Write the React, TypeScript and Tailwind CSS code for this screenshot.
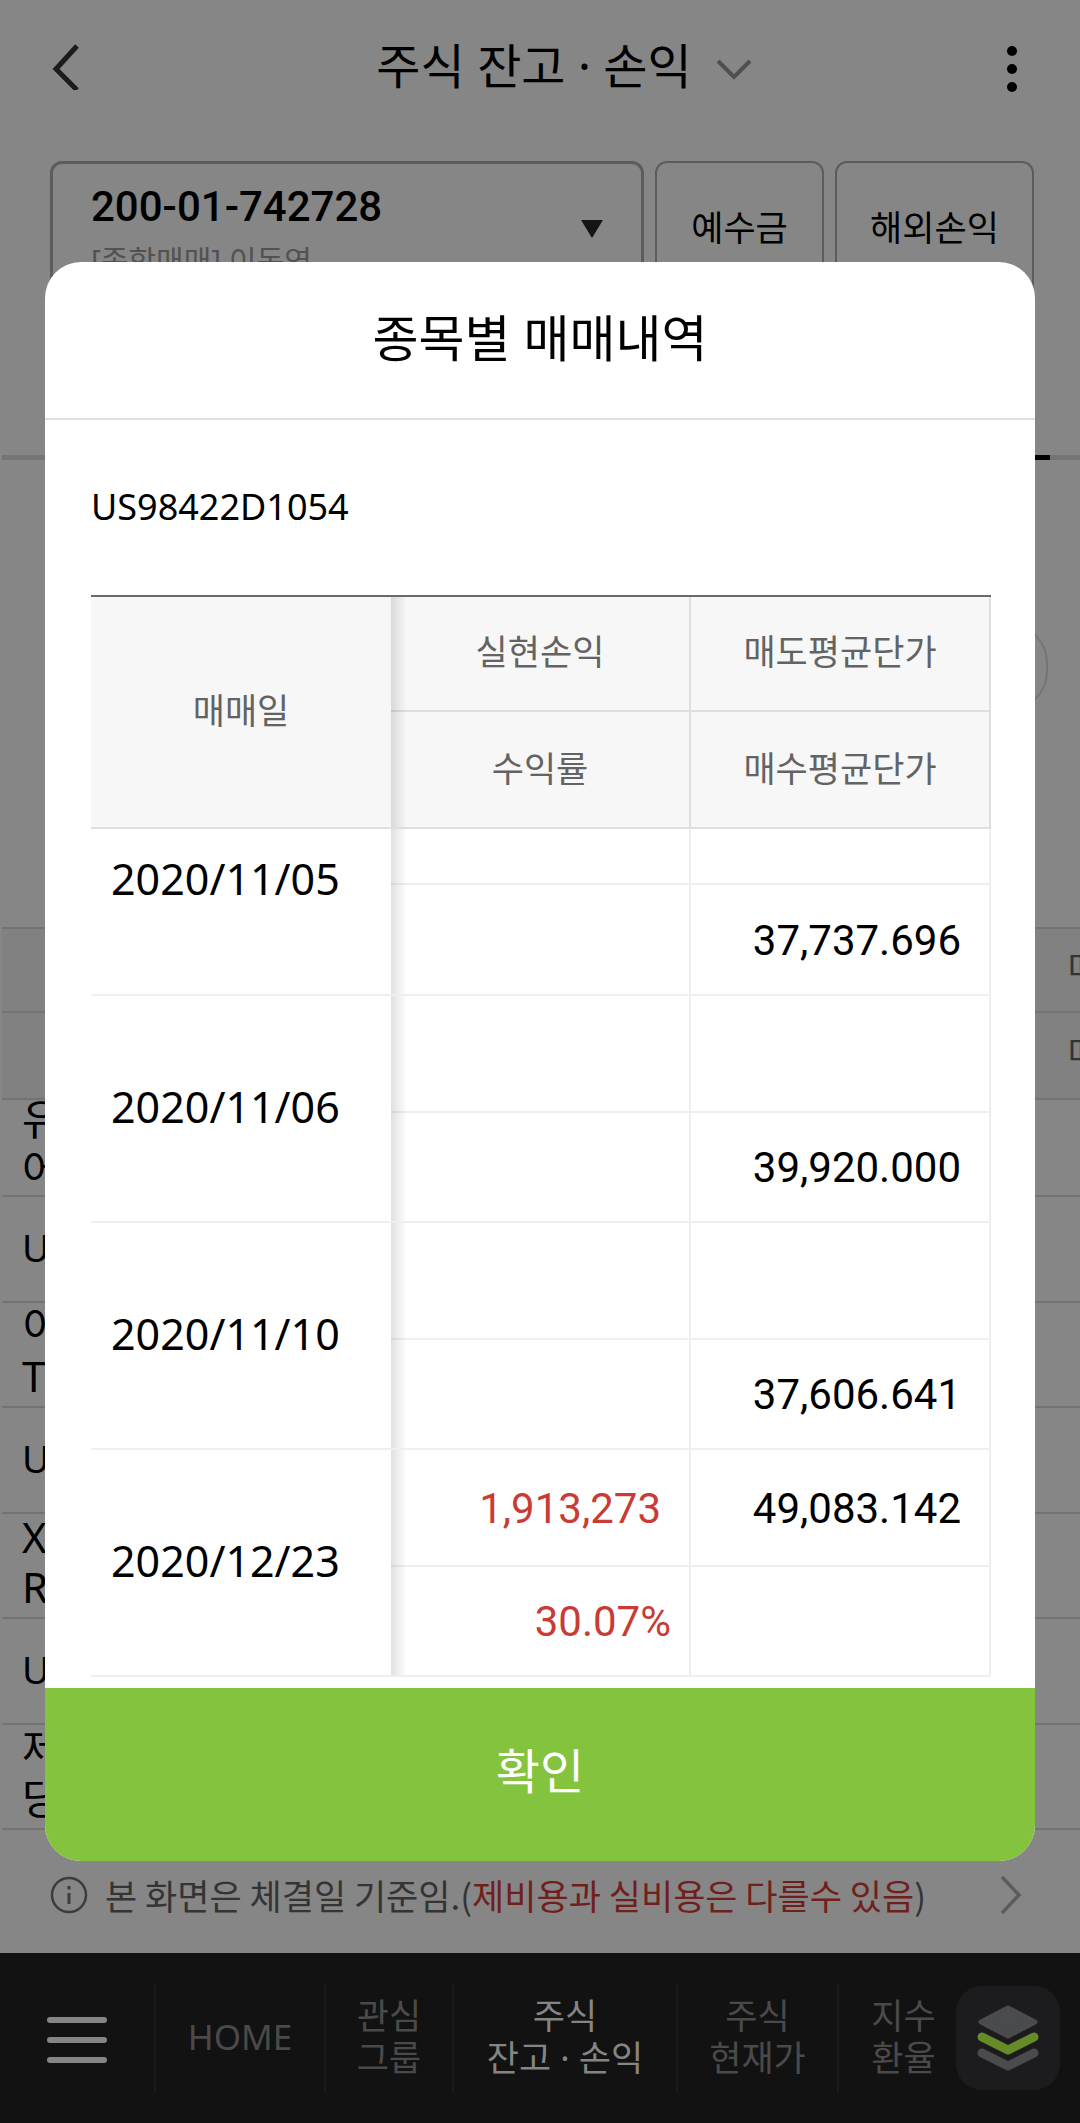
import React from 'react';
import clsx from 'clsx';

const trades = [
  { date: '2020/11/05', profit: '', rate: '', sell: '', buy: '37,737.696' },
  { date: '2020/11/06', profit: '', rate: '', sell: '', buy: '39,920.000' },
  { date: '2020/11/10', profit: '', rate: '', sell: '', buy: '37,606.641' },
  { date: '2020/12/23', profit: '1,913,273', rate: '30.07%', sell: '49,083.142', buy: '' },
];

const holdings = [
  { name: ['유', '어'], code: 'U' },
  { name: ['이', 'T'], code: 'U' },
  { name: ['X', 'R'], code: 'U' },
  { name: ['제', '당'], code: '' },
];

const tabs = [
  { lines: ['HOME'], box: 'w-[170px]' },
  { lines: ['관심', '그룹'], box: 'w-[128px]' },
  { lines: ['주식', '잔고 · 손익'], box: 'w-[224px]', active: true },
  { lines: ['주식', '현재가'], box: 'w-[161px]' },
  { lines: ['지수', '환율'], box: 'flex-1 pl-3' },
];

const frozen =
  "relative after:content-[''] after:absolute after:inset-y-0 after:left-full after:w-4 after:bg-gradient-to-r after:from-black/12 after:to-transparent";

const PageHeader: React.FC = () => (
  <header className="h-[132px] px-12 flex items-center justify-between">
    <button aria-label="뒤로" className="w-12 h-12">
      <svg viewBox="0 0 48 48" className="w-12 h-12" fill="none" stroke="#1c1c1c" strokeWidth="5">
        <path d="M29 4 8 27l21 21" />
      </svg>
    </button>
    <button className="ml-10 flex items-center gap-6 text-[48px] leading-[60px]">
      주식 잔고 · 손익
      <svg viewBox="0 0 36 22" className="w-9 h-[22px] mt-2" fill="none" stroke="#4f4f4f" strokeWidth="4">
        <path d="M2 2l16 16L34 2" />
      </svg>
    </button>
    <button aria-label="더보기" className="w-10 h-14">
      <svg viewBox="0 0 40 56" className="w-10 h-14">
        <circle cx="20" cy="13" r="5" />
        <circle cx="20" cy="31" r="5" />
        <circle cx="20" cy="49" r="5" />
      </svg>
    </button>
  </header>
);

const AccountBar: React.FC = () => (
  <div className="mt-[29px] pl-[50px] pr-[46px] flex gap-[11px] h-[134px]">
    <div className="relative flex-1 rounded-xl border-3 border-[#5c5c5c] pl-[38px] pt-[15px]">
      <select
        aria-label="계좌번호"
        className="block w-full appearance-none bg-transparent font-['Roboto'] font-medium text-[42px] leading-[56px]"
      >
        <option>200-01-742728</option>
      </select>
      <p className="pt-1 text-[30px] leading-[44px] text-[#525252]">[종합매매] 이동영</p>
      <svg viewBox="0 0 22 18" className="absolute right-[38px] top-[56px] w-[22px] h-[18px] pointer-events-none">
        <path d="M0 0h22L11 18z" fill="#151515" />
      </svg>
    </div>
    <button className="w-[169px] rounded-xl border-2 border-[#5c5c5c] text-[35px]">예수금</button>
    <button className="w-[199px] rounded-xl border-2 border-[#5c5c5c] text-[35px]">해외손익</button>
  </div>
);

const Holdings: React.FC = () => (
  <div className="mt-[345px] ml-0.5 overflow-hidden">
    {['매', '매'].map((label, i) => (
      <div
        key={i}
        className={clsx(
          'pb-1 flex items-center justify-end border-t-2 border-[#737373] bg-[#818181] text-[35px] text-[#333]',
          i === 0 ? 'h-[84px]' : 'h-[87px]'
        )}
      >
        <span className="-mr-5">{label}</span>
      </div>
    ))}
    {holdings.map((item, i) => (
      <React.Fragment key={i}>
        <div
          className={clsx(
            'pl-5 pb-2 border-t-2 border-[#737373] text-[42px] leading-[50px] flex flex-col justify-center',
            i === 0 ? 'h-[97px]' : 'h-[105px]'
          )}
        >
          {item.name.map((line) => (
            <span key={line}>{line}</span>
          ))}
        </div>
        {item.code && (
          <div className="pl-5 pb-1 h-[106px] border-t-2 border-[#737373] text-[38px] flex items-center">
            {item.code}
          </div>
        )}
      </React.Fragment>
    ))}
    <div className="border-t-2 border-[#737373]" />
  </div>
);

const Notice: React.FC = () => (
  <button className="mt-auto mb-[30px] h-14 pl-[50px] pr-[58px] flex items-center font-['Noto_Sans_CJK_KR'] text-[35px] text-[#343434]">
    <svg viewBox="0 0 38 38" className="w-[38px] h-[38px] mr-[17px]" fill="none" stroke="#3c3c3c" strokeWidth="2.5">
      <circle cx="19" cy="19" r="17" />
      <path d="M19 17v11M19 10v3.5" strokeWidth="3" />
    </svg>
    <span>
      본 화면은 체결일 기준임.(<span className="text-[#701f1c]">제비용과 실비용은 다를수 있음</span>)
    </span>
    <svg viewBox="0 0 22 38" className="w-[22px] h-[38px] ml-auto" fill="none" stroke="#5c5c5c" strokeWidth="3.5">
      <path d="M2 1l17 18L2 37" />
    </svg>
  </button>
);

const BottomNav: React.FC = () => (
  <nav className="h-[170px] bg-[#121212] pr-5 flex items-center">
    <button aria-label="메뉴" className="w-[154px] pt-1 pl-[46px]">
      <svg viewBox="0 0 62 50" className="w-[62px] h-[50px]" stroke="#858585" strokeWidth="6" strokeLinecap="round">
        <path d="M4 5h54M4 25h54M4 45h54" />
      </svg>
    </button>
    {tabs.map((tab) => (
      <a
        key={tab.lines.join('')}
        href="#"
        className={clsx(
          'h-[108px] pb-0.5 border-l-2 border-[#1a1a1a] flex flex-col items-center justify-center text-[35px] leading-[42px] whitespace-nowrap',
          tab.box,
          tab.active ? 'text-[#858585]' : 'text-[#4a4a4a]'
        )}
      >
        {tab.lines.map((line) => (
          <span key={line}>{line}</span>
        ))}
      </a>
    ))}
    <button aria-label="빠른 메뉴" className="w-[104px] h-[104px] rounded-[26px] bg-[#1c1c1e] flex justify-center items-center">
      <svg viewBox="0 0 64 68" className="w-16 h-[68px]" fill="none" strokeLinejoin="round" strokeLinecap="round">
        <path d="M32 4 59 18 32 32 5 18z" fill="#4a4b4c" stroke="#4a4b4c" strokeWidth="5" />
        <path d="M6 49 32 62 58 49" stroke="#4a4b4c" strokeWidth="9" />
        <path d="M6 33 32 46 58 33" stroke="#1c1c1e" strokeWidth="14" />
        <path d="M6 33 32 46 58 33" stroke="#688b2a" strokeWidth="9" />
      </svg>
    </button>
  </nav>
);

const TradeTable: React.FC = () => (
  <table className="w-full table-fixed border-separate border-spacing-0 border-t-2 border-[#6a6a6a]">
    <thead className="text-[35px] text-[#636363]">
      <tr className="h-[115px]">
        <th rowSpan={2} className={clsx(frozen, 'bg-[#f7f7f7] pb-0.5 border-b-2 border-[#dedede] font-normal')}>매매일</th>
        <th className="bg-[#f7f7f7] pb-0.5 border-b-2 border-r-2 border-[#dedede] font-normal">실현손익</th>
        <th className="bg-[#f7f7f7] pb-0.5 border-b-2 border-r-2 border-[#dedede] font-normal">매도평균단가</th>
      </tr>
      <tr className="h-[117px]">
        <th className="bg-[#f7f7f7] border-b-2 border-r-2 border-[#dedede] font-normal">수익률</th>
        <th className="bg-[#f7f7f7] border-b-2 border-r-2 border-[#dedede] font-normal">매수평균단가</th>
      </tr>
    </thead>
    <tbody className="font-['Roboto'] text-[42px] leading-[56px] text-right">
      {trades.map((t, i) => (
        <React.Fragment key={t.date}>
          <tr className={i === 0 ? 'h-[56px]' : 'h-[117px]'}>
            <td
              rowSpan={2}
              className={clsx(
                frozen,
                "border-b-2 border-[#efefef] pl-5 text-left font-['Noto_Sans'] text-[43px]",
                i === 0 ? 'align-top pt-[22px]' : 'pb-1'
              )}
            >
              {t.date}
            </td>
            <td className="border-b-2 border-r-2 border-[#efefef] pt-0.5 pr-7 text-[#c93b35]">{t.profit}</td>
            <td className="border-b-2 border-r-2 border-[#efefef] pt-0.5 pr-7">{t.sell}</td>
          </tr>
          <tr className={i === 0 ? 'h-[111px]' : 'h-[110px]'}>
            <td className="border-b-2 border-r-2 border-[#efefef] pt-0.5 pr-[18px] text-[#c93b35]">{t.rate}</td>
            <td className="border-b-2 border-r-2 border-[#efefef] pt-0.5 pr-7">{t.buy}</td>
          </tr>
        </React.Fragment>
      ))}
    </tbody>
  </table>
);

const TradeDialog: React.FC = () => (
  <div className="absolute inset-0 px-[45px] flex items-center">
    <section role="dialog" aria-label="종목별 매매내역" className="w-full rounded-[36px] bg-white overflow-hidden">
      <h2 className="h-[158px] pb-1 flex items-center justify-center border-b-2 border-[#e0e0e0] text-[50px]">
        종목별 매매내역
      </h2>
      <div className="pl-[46px] pr-11 pb-[11px]">
        <p className="h-[175px] pb-0.5 flex items-center text-[36px]">US98422D1054</p>
        <TradeTable />
      </div>
      <button className="block w-full h-[173px] pb-2 bg-[#84c33e] text-[48px] text-white">확인</button>
    </section>
  </div>
);

export default function App() {
  return (
    <div className="relative min-h-screen flex flex-col overflow-hidden bg-[#868686] text-black font-['Noto_Sans','Noto_Sans_CJK_KR',sans-serif]">
      <PageHeader />
      <AccountBar />
      <div className="mt-40 ml-0.5 h-[5px] bg-[#757575] flex justify-end">
        <div className="mr-[30px] w-60 bg-black" />
      </div>
      <div className="mt-[163px] -mb-[129px] mr-8 h-[88px] w-60 self-end rounded-[40px] border-2 border-[#757575]" />
      <Holdings />
      <Notice />
      <BottomNav />
      <TradeDialog />
    </div>
  );
}
